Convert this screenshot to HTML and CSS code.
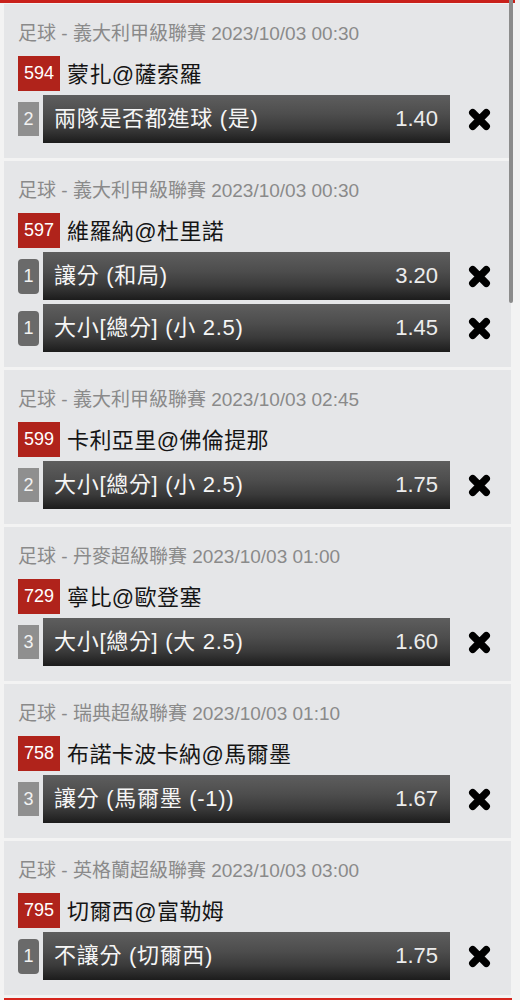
FILE: index.html
```html
<!DOCTYPE html>
<html lang="zh-Hant">
  <head>
    <meta charset="UTF-8" />
    <meta name="viewport" content="width=device-width, initial-scale=1.0" />
    <title>投注單</title>
    <link rel="stylesheet" href="styles.css">
  </head>
  <body>
    <div class="slip">
      <div class="topline"></div>
      <div class="scroll-thumb"></div>

      <div class="card">
        <div class="league">足球 - 義大利甲級聯賽 2023/10/03 00:30</div>
        <div class="match"><span class="code">594</span><span class="teams">蒙扎@薩索羅</span></div>
        <div class="bets">
          <div class="bet">
            <span class="qty">2</span>
            <div class="bar"><span class="pick">兩隊是否都進球 (是)</span><span class="odds">1.40</span></div>
            <button class="remove"><svg viewBox="0 0 22 22"><path d="M4.5 4.5L17.5 17.5M17.5 4.5L4.5 17.5" /></svg></button>
          </div>
        </div>
      </div>

      <div class="card">
        <div class="league">足球 - 義大利甲級聯賽 2023/10/03 00:30</div>
        <div class="match"><span class="code">597</span><span class="teams">維羅納@杜里諾</span></div>
        <div class="bets">
          <div class="bet">
            <span class="qty one">1</span>
            <div class="bar"><span class="pick">讓分 (和局)</span><span class="odds">3.20</span></div>
            <button class="remove"><svg viewBox="0 0 22 22"><path d="M4.5 4.5L17.5 17.5M17.5 4.5L4.5 17.5" /></svg></button>
          </div>
          <div class="bet">
            <span class="qty one">1</span>
            <div class="bar"><span class="pick">大小[總分] (小 2.5)</span><span class="odds">1.45</span></div>
            <button class="remove"><svg viewBox="0 0 22 22"><path d="M4.5 4.5L17.5 17.5M17.5 4.5L4.5 17.5" /></svg></button>
          </div>
        </div>
      </div>

      <div class="card">
        <div class="league">足球 - 義大利甲級聯賽 2023/10/03 02:45</div>
        <div class="match"><span class="code">599</span><span class="teams">卡利亞里@佛倫提那</span></div>
        <div class="bets">
          <div class="bet">
            <span class="qty">2</span>
            <div class="bar"><span class="pick">大小[總分] (小 2.5)</span><span class="odds">1.75</span></div>
            <button class="remove"><svg viewBox="0 0 22 22"><path d="M4.5 4.5L17.5 17.5M17.5 4.5L4.5 17.5" /></svg></button>
          </div>
        </div>
      </div>

      <div class="card">
        <div class="league">足球 - 丹麥超級聯賽 2023/10/03 01:00</div>
        <div class="match"><span class="code">729</span><span class="teams">寧比@歐登塞</span></div>
        <div class="bets">
          <div class="bet">
            <span class="qty">3</span>
            <div class="bar"><span class="pick">大小[總分] (大 2.5)</span><span class="odds">1.60</span></div>
            <button class="remove"><svg viewBox="0 0 22 22"><path d="M4.5 4.5L17.5 17.5M17.5 4.5L4.5 17.5" /></svg></button>
          </div>
        </div>
      </div>

      <div class="card">
        <div class="league">足球 - 瑞典超級聯賽 2023/10/03 01:10</div>
        <div class="match"><span class="code">758</span><span class="teams">布諾卡波卡納@馬爾墨</span></div>
        <div class="bets">
          <div class="bet">
            <span class="qty">3</span>
            <div class="bar"><span class="pick">讓分 (馬爾墨 (-1))</span><span class="odds">1.67</span></div>
            <button class="remove"><svg viewBox="0 0 22 22"><path d="M4.5 4.5L17.5 17.5M17.5 4.5L4.5 17.5" /></svg></button>
          </div>
        </div>
      </div>

      <div class="card">
        <div class="league">足球 - 英格蘭超級聯賽 2023/10/03 03:00</div>
        <div class="match"><span class="code">795</span><span class="teams">切爾西@富勒姆</span></div>
        <div class="bets">
          <div class="bet">
            <span class="qty one">1</span>
            <div class="bar"><span class="pick">不讓分 (切爾西)</span><span class="odds">1.75</span></div>
            <button class="remove"><svg viewBox="0 0 22 22"><path d="M4.5 4.5L17.5 17.5M17.5 4.5L4.5 17.5" /></svg></button>
          </div>
        </div>
      </div>

      <div class="footer">
        <div class="footer-btn"></div>
      </div>
    </div>
  </body>
</html>
```

FILE: styles.css
```css
* {
  margin: 0;
  padding: 0;
  box-sizing: border-box;
}
body {
  background-color: #f3f3f3;
  font-family: "Liberation Sans", "Noto Sans CJK TC", sans-serif;
  overflow: hidden;
}
.slip {
  position: relative;
  display: flex;
  flex-direction: column;
  gap: 3px;
  padding-right: 9px;
}
.topline {
  height: 3px;
  background-color: #c9211b;
  margin-bottom: -2px;
  margin-right: -4px;
}
.scroll-thumb {
  position: absolute;
  top: 0;
  right: 7px;
  width: 4px;
  height: 303px;
  background-color: #8c8c8c;
  border-radius: 0 0 2px 2px;
}
.card {
  margin-left: 4px;
  background-color: #e5e6e8;
  padding: 18px 4px 15px 14px;
}
.league {
  font-size: 19px;
  line-height: 24px;
  color: #8a8a8a;
  white-space: nowrap;
}
.match {
  display: flex;
  align-items: center;
  gap: 7px;
  margin-top: 10px;
  height: 35px;
}
.code {
  background-color: #b0231b;
  color: #fff;
  font-size: 18px;
  height: 35px;
  line-height: 35px;
  padding: 0 6px;
}
.teams {
  font-size: 22px;
  color: #151515;
  letter-spacing: 0.4px;
  padding-bottom: 3px;
}
.bets {
  display: flex;
  flex-direction: column;
  gap: 4px;
  margin-top: 4px;
}
.bet {
  display: flex;
  align-items: center;
}
.qty {
  width: 21px;
  height: 34px;
  line-height: 34px;
  text-align: center;
  font-size: 18px;
  color: #f2f2f2;
  background-color: #8f8f8f;
  margin-right: 4px;
}
.qty.one {
  height: 35px;
  background-color: #6a6a6a;
  border-radius: 4px;
}
.bar {
  flex: 1;
  display: flex;
  justify-content: space-between;
  height: 48px;
  line-height: 48px;
  padding: 0 12px 0 11px;
  font-size: 22px;
  color: #f6f6f6;
  background: linear-gradient(to bottom, #5e5e5e 0%, #4d4d4d 40%, #3a3a3a 70%, #1c1c1c 100%);
}
.pick {
  letter-spacing: 0.7px;
}
.odds {
  color: #ececec;
}
.remove {
  width: 57px;
  height: 48px;
  border: none;
  background: none;
  display: flex;
  align-items: center;
  justify-content: center;
  cursor: pointer;
}
.remove svg {
  width: 23px;
  height: 23px;
  margin-left: 1px;
}
.remove path {
  stroke: #000;
  stroke-width: 7;
  stroke-linecap: round;
  fill: none;
}
.footer {
  margin-left: 4px;
  margin-right: -1px;
  height: 60px;
  border: 2px solid #d6251d;
  background-color: #fff;
  display: flex;
  justify-content: flex-end;
  padding-right: 20px;
}
.footer-btn {
  width: 38px;
  background-color: #c21d15;
}
```
